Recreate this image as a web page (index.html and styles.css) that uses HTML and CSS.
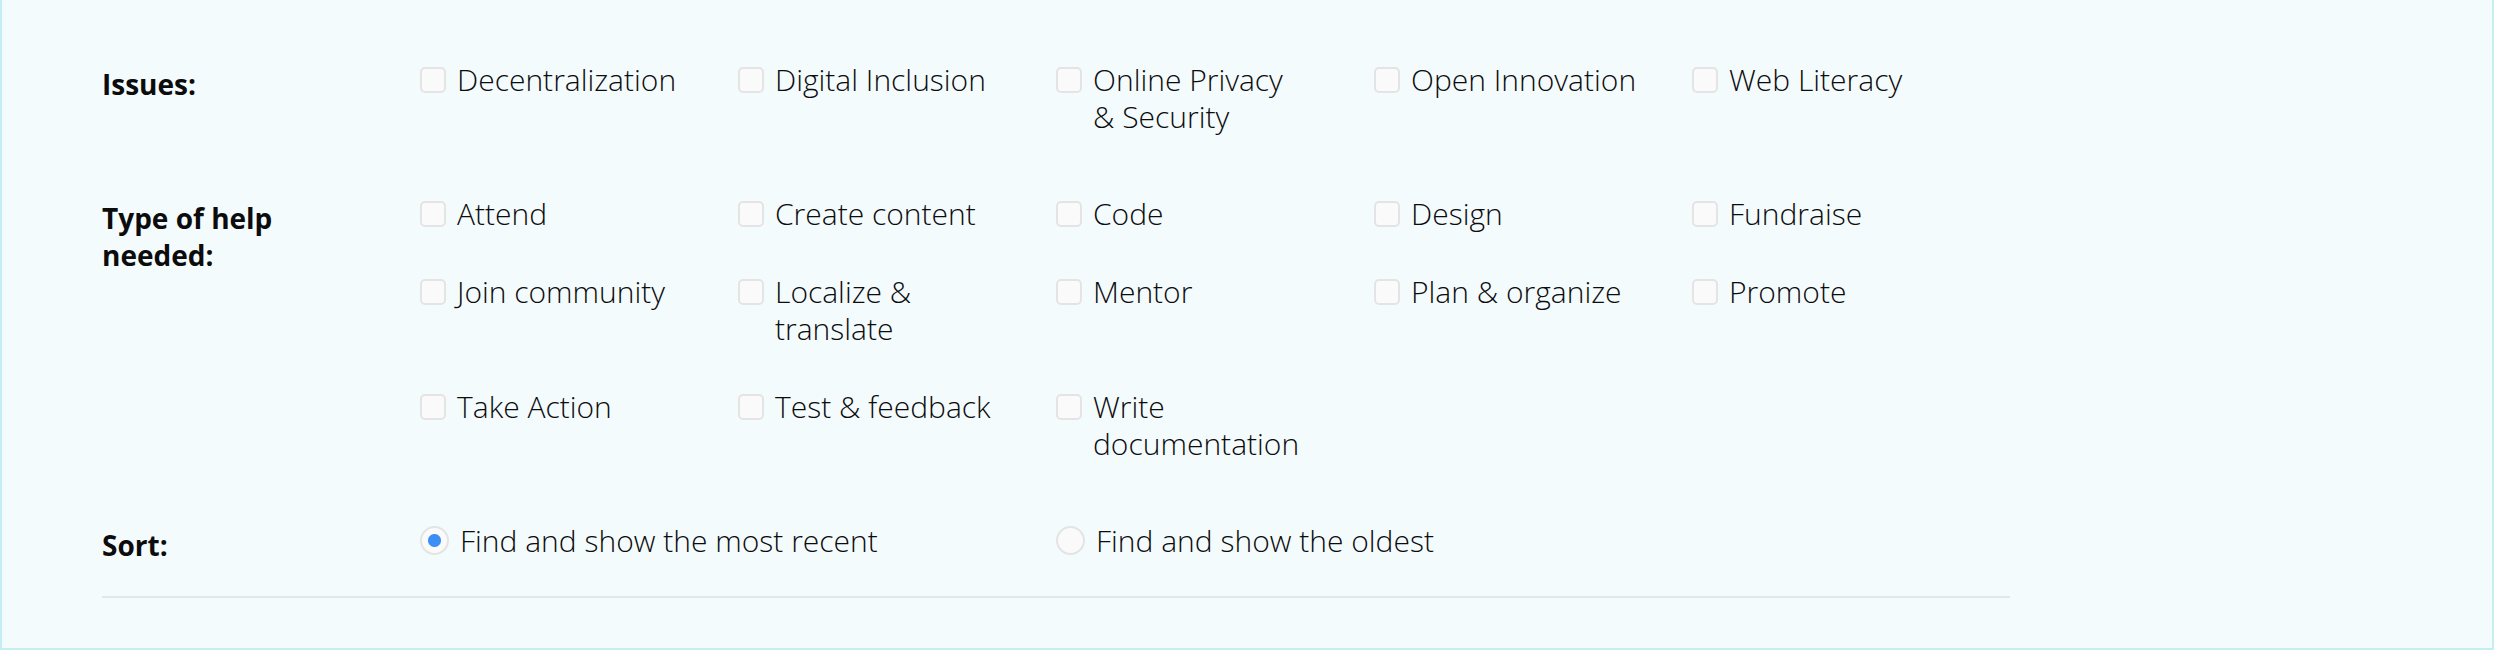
FILE: index.html
```html
<!DOCTYPE html>
<html lang="en">
<head>
    <meta charset="UTF-8">
    <meta name="viewport" content="width=device-width, initial-scale=1.0">
    <title>Filters</title>
    <link rel="stylesheet" href="styles.css">
</head>
<body>
    <div class="panel">
        <form class="filters">
            <div class="group">
                <div class="group-label">Issues:</div>
                <div class="options">
                    <label class="option"><input type="checkbox" name="issues" value="decentralization"><span>Decentralization</span></label>
                    <label class="option"><input type="checkbox" name="issues" value="digital-inclusion"><span>Digital Inclusion</span></label>
                    <label class="option"><input type="checkbox" name="issues" value="online-privacy"><span>Online Privacy<br>&amp; Security</span></label>
                    <label class="option"><input type="checkbox" name="issues" value="open-innovation"><span>Open Innovation</span></label>
                    <label class="option"><input type="checkbox" name="issues" value="web-literacy"><span>Web Literacy</span></label>
                </div>
            </div>

            <div class="group">
                <div class="group-label">Type of help<br>needed:</div>
                <div class="options">
                    <label class="option"><input type="checkbox" name="help" value="attend"><span>Attend</span></label>
                    <label class="option"><input type="checkbox" name="help" value="create-content"><span>Create content</span></label>
                    <label class="option"><input type="checkbox" name="help" value="code"><span>Code</span></label>
                    <label class="option"><input type="checkbox" name="help" value="design"><span>Design</span></label>
                    <label class="option"><input type="checkbox" name="help" value="fundraise"><span>Fundraise</span></label>
                    <label class="option"><input type="checkbox" name="help" value="join-community"><span>Join community</span></label>
                    <label class="option"><input type="checkbox" name="help" value="localize"><span>Localize &amp;<br>translate</span></label>
                    <label class="option"><input type="checkbox" name="help" value="mentor"><span>Mentor</span></label>
                    <label class="option"><input type="checkbox" name="help" value="plan"><span>Plan &amp; organize</span></label>
                    <label class="option"><input type="checkbox" name="help" value="promote"><span>Promote</span></label>
                    <label class="option"><input type="checkbox" name="help" value="take-action"><span>Take Action</span></label>
                    <label class="option"><input type="checkbox" name="help" value="test"><span>Test &amp; feedback</span></label>
                    <label class="option"><input type="checkbox" name="help" value="docs"><span>Write<br>documentation</span></label>
                </div>
            </div>

            <div class="group sort">
                <div class="group-label">Sort:</div>
                <div class="options">
                    <label class="option wide"><input type="radio" name="sort" value="recent" checked><span>Find and show the most recent</span></label>
                    <label class="option wide"><input type="radio" name="sort" value="oldest"><span>Find and show the oldest</span></label>
                </div>
            </div>

            <hr>
        </form>
    </div>
</body>
</html>
```

FILE: styles.css
```css
html, body {
    margin: 0;
    padding: 0;
}
body {
    font-family: "Open Sans", "Liberation Sans", sans-serif;
    color: #0c0c0d;
    background-color: #f4fbfd;
}
.panel {
    box-sizing: border-box;
    height: 650px;
    border: 2px solid #c4eef1;
    border-top: none;
    background-color: #f4fbfd;
}
.filters {
    width: 1908px;
    margin-left: 100px;
    padding-top: 61px;
}
.group {
    display: grid;
    grid-template-columns: 318px 1fr;
    margin-bottom: 60px;
}
.group.sort {
    margin-bottom: 32px;
}
.group-label {
    font-weight: 700;
    font-size: 28px;
    line-height: 37px;
    padding-top: 5px;
}
.options {
    display: grid;
    grid-template-columns: repeat(5, 318px);
    row-gap: 41px;
}
.option {
    display: flex;
    align-items: flex-start;
    font-weight: 300;
    font-size: 30px;
    line-height: 37px;
    cursor: pointer;
}
.option.wide {
    grid-column: span 2;
}
.option input {
    appearance: none;
    -webkit-appearance: none;
    flex: none;
    box-sizing: border-box;
    width: 26px;
    height: 26px;
    margin: 6px 11px 0 0;
    border: 2px solid #e4e4e4;
    border-radius: 5px;
    background-color: #fafafa;
}
.option input[type="radio"] {
    width: 29px;
    height: 29px;
    margin-top: 4px;
    border-radius: 50%;
}
.option input[type="radio"]:checked {
    background: radial-gradient(circle, #3b8ef6 0 6px, #fafafa 7px);
}
hr {
    margin: 0;
    border: none;
    border-top: 2px solid #e4e6e8;
}
```
